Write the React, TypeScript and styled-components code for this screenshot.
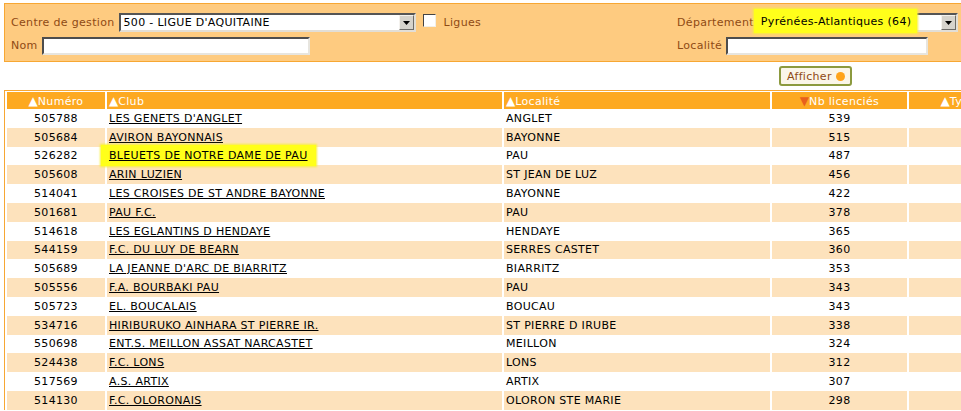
import React from 'react';
import { createGlobalStyle, styled } from 'styled-components';

const GlobalStyle = createGlobalStyle`
  html, body {
    margin: 0;
    padding: 0;
    background: #fff;
    overflow: hidden;
  }
  body {
    font-family: 'DejaVu Sans', Verdana, sans-serif;
    font-size: 11px;
    letter-spacing: 0.32px;
  }
`;

const Page = styled.div`
  width: 1010px;
  padding: 3px 0 0 4px;
`;

const FilterPanel = styled.div`
  display: flex;
  justify-content: space-between;
  background: #fecb80;
  border: 1px solid #f7a733;
  border-right: none;
  padding: 9px 0 6px 6px;
`;

const FilterColumn = styled.div<{ $width?: number }>`
  display: flex;
  flex-direction: column;
  gap: 4px;
  width: ${(p) => (p.$width ? `${p.$width}px` : 'auto')};
`;

const FilterRow = styled.div`
  display: flex;
  align-items: center;
  gap: 4px;
  height: 19px;
`;

const Label = styled.span`
  color: #8f4a14;
  white-space: nowrap;
`;

const SelectBox = styled.div<{ $width: number }>`
  display: flex;
  align-items: center;
  box-sizing: border-box;
  width: ${(p) => p.$width}px;
  height: 19px;
  background: #fff;
  border: 2px solid;
  border-color: #555 #e2ded6 #e2ded6 #555;
  padding-left: 3px;
  color: #000;
`;

const SelectText = styled.span<{ $mark?: boolean }>`
  flex: 1;
  white-space: nowrap;
  ${(p) =>
    p.$mark &&
    `
    flex: 0 0 auto;
    background: #ffff1a;
    padding: 6px 6px 5px 7px;
    margin: -3px auto 0 -9px;
    box-shadow: 0 0 2px 1px #f8f03a;
  `}
`;

const ArrowButton = styled.span`
  display: flex;
  align-items: center;
  justify-content: center;
  box-sizing: border-box;
  width: 15px;
  height: 15px;
  background: #d6d3cc;
  border: 1px solid;
  border-color: #f4f2ee #6e6c68 #6e6c68 #f4f2ee;
`;

const Checkbox = styled.span`
  display: inline-block;
  box-sizing: border-box;
  width: 13px;
  height: 13px;
  margin: -5px 4px 0 3px;
  background: #fff;
  border: 1px solid;
  border-color: #444 #f2efe8 #f2efe8 #444;
`;

const TextInput = styled.div<{ $width: number }>`
  box-sizing: border-box;
  width: ${(p) => p.$width}px;
  height: 18px;
  background: #fff;
  border: 2px solid;
  border-color: #4d4d4d #e7e5df #e7e5df #4d4d4d;
`;

const ButtonBar = styled.div`
  display: flex;
  padding: 4px 0 4px 775px;
`;

const ShowButton = styled.button`
  display: flex;
  align-items: center;
  gap: 4px;
  height: 20px;
  padding: 0 5px 0 6px;
  font-family: 'DejaVu Sans', Verdana, sans-serif;
  font-size: 11px;
  letter-spacing: 0.32px;
  color: #8f4a14;
  background: #fbf6e9;
  border: 2px solid #8c9a3f;
  border-radius: 3px;
`;

const Dot = styled.span`
  display: inline-block;
  width: 9px;
  height: 9px;
  border-radius: 50%;
  background: #ffa41c;
`;

const Table = styled.table`
  border-collapse: separate;
  border-spacing: 2px 0;
  border-top: 1px solid #f7a733;
  border-left: 1px solid #f7a733;
  padding-top: 1px;
  width: 1006px;
  table-layout: fixed;
`;

const HeadCell = styled.th<{ $align?: string }>`
  background: #fda921;
  color: #fff;
  font-weight: normal;
  height: 17px;
  padding: 0 2px;
  text-align: ${(p) => p.$align || 'left'};
  white-space: nowrap;
  overflow: hidden;
`;

const Arrow = styled.span<{ $active?: boolean }>`
  color: ${(p) => (p.$active ? '#e8601c' : '#fff')};
  font-size: 12px;
  letter-spacing: 0;
`;

const Row = styled.tr<{ $alt: boolean }>`
  background: ${(p) => (p.$alt ? '#fde2bc' : '#fff')};
`;

const Cell = styled.td<{ $align?: string }>`
  height: 18.8px;
  padding: 0 2px;
  color: #000;
  text-align: ${(p) => p.$align || 'left'};
  white-space: nowrap;
`;

const ClubLink = styled.a<{ $mark?: boolean }>`
  color: #000;
  text-decoration: underline;
  ${(p) =>
    p.$mark &&
    `
    display: inline-block;
    background: #ffff1a;
    padding: 4px 8px 4px 8px;
    margin: -4px -8px -4px -8px;
    box-shadow: 0 0 2px 1px #f8f03a;
  `}
`;

const clubs = [
  ['505788', "LES GENETS D'ANGLET", 'ANGLET', '539'],
  ['505684', 'AVIRON BAYONNAIS', 'BAYONNE', '515'],
  ['526282', 'BLEUETS DE NOTRE DAME DE PAU', 'PAU', '487'],
  ['505608', 'ARIN LUZIEN', 'ST JEAN DE LUZ', '456'],
  ['514041', 'LES CROISES DE ST ANDRE BAYONNE', 'BAYONNE', '422'],
  ['501681', 'PAU F.C.', 'PAU', '378'],
  ['514618', 'LES EGLANTINS D HENDAYE', 'HENDAYE', '365'],
  ['544159', 'F.C. DU LUY DE BEARN', 'SERRES CASTET', '360'],
  ['505689', "LA JEANNE D'ARC DE BIARRITZ", 'BIARRITZ', '353'],
  ['505556', 'F.A. BOURBAKI PAU', 'PAU', '343'],
  ['505723', 'EL. BOUCALAIS', 'BOUCAU', '343'],
  ['534716', 'HIRIBURUKO AINHARA ST PIERRE IR.', 'ST PIERRE D IRUBE', '338'],
  ['550698', 'ENT.S. MEILLON ASSAT NARCASTET', 'MEILLON', '324'],
  ['524438', 'F.C. LONS', 'LONS', '312'],
  ['517569', 'A.S. ARTIX', 'ARTIX', '307'],
  ['514130', 'F.C. OLORONAIS', 'OLORON STE MARIE', '298'],
];

function DropArrow() {
  return (
    <ArrowButton>
      <svg width="7" height="4" viewBox="0 0 7 4">
        <path d="M0 0h7L3.5 4z" fill="#000" />
      </svg>
    </ArrowButton>
  );
}

export default function App() {
  return (
    <>
      <GlobalStyle />
      <Page>
        <FilterPanel>
          <FilterColumn>
            <FilterRow>
              <Label>Centre de gestion</Label>
              <SelectBox $width={297}>
                <SelectText>500 - LIGUE D'AQUITAINE</SelectText>
                <DropArrow />
              </SelectBox>
              <Checkbox />
              <Label>Ligues</Label>
            </FilterRow>
            <FilterRow>
              <Label>Nom</Label>
              <TextInput $width={268} />
            </FilterRow>
          </FilterColumn>
          <FilterColumn $width={337}>
            <FilterRow>
              <Label>Département</Label>
              <SelectBox $width={200}>
                <SelectText $mark>Pyrénées-Atlantiques (64)</SelectText>
                <DropArrow />
              </SelectBox>
            </FilterRow>
            <FilterRow>
              <Label>Localité</Label>
              <TextInput $width={202} />
            </FilterRow>
          </FilterColumn>
        </FilterPanel>
        <ButtonBar>
          <ShowButton>
            Afficher <Dot />
          </ShowButton>
        </ButtonBar>
        <Table>
          <colgroup>
            <col style={{ width: 98 }} />
            <col style={{ width: 395 }} />
            <col style={{ width: 266 }} />
            <col style={{ width: 135 }} />
            <col />
          </colgroup>
          <thead>
            <tr>
              <HeadCell $align="center">
                <Arrow>▲</Arrow>Numéro
              </HeadCell>
              <HeadCell>
                <Arrow>▲</Arrow>Club
              </HeadCell>
              <HeadCell>
                <Arrow>▲</Arrow>Localité
              </HeadCell>
              <HeadCell $align="center">
                <Arrow $active>▼</Arrow>Nb licenciés
              </HeadCell>
              <HeadCell $align="center">
                <Arrow>▲</Arrow>Type
              </HeadCell>
            </tr>
          </thead>
          <tbody>
            {clubs.map(([num, club, city, count], i) => (
              <Row key={num} $alt={i % 2 === 1}>
                <Cell $align="center">{num}</Cell>
                <Cell>
                  <ClubLink href="#" $mark={num === '526282'}>
                    {club}
                  </ClubLink>
                </Cell>
                <Cell>{city}</Cell>
                <Cell $align="center">{count}</Cell>
                <Cell />
              </Row>
            ))}
          </tbody>
        </Table>
      </Page>
    </>
  );
}
